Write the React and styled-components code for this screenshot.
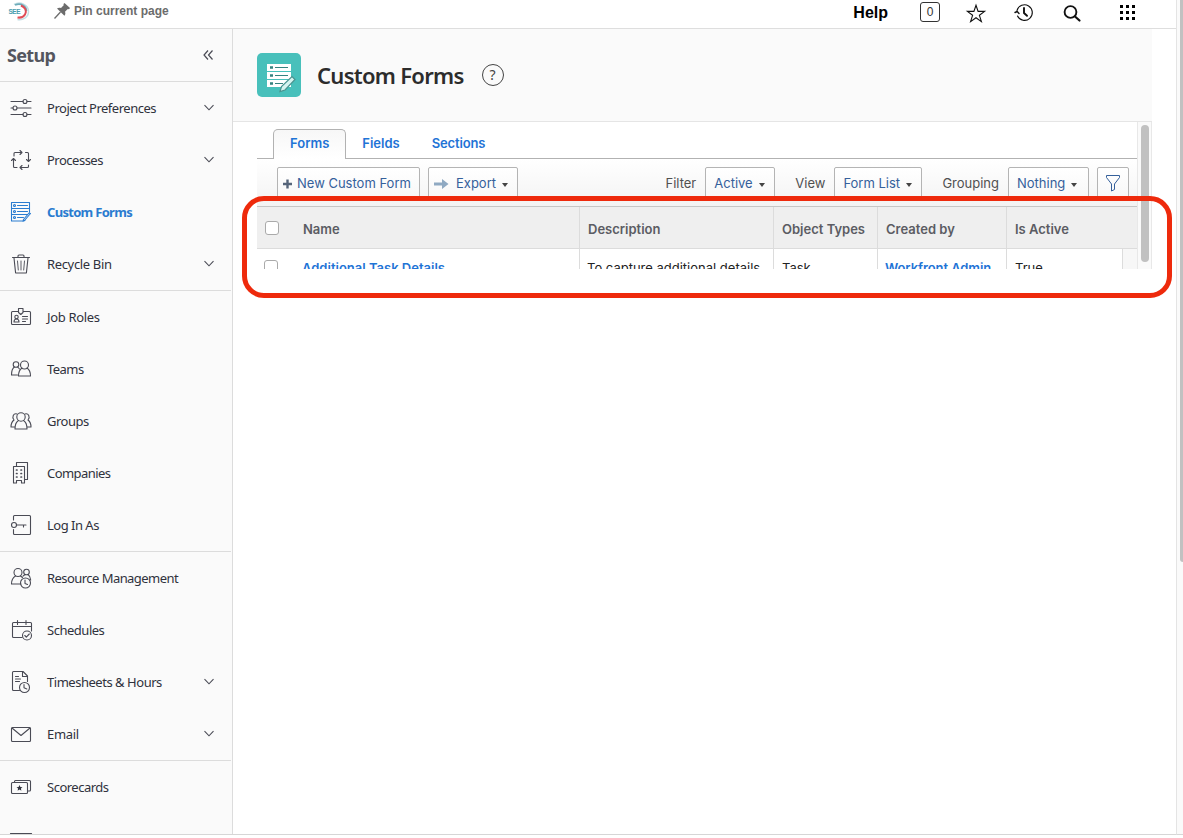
import React from 'react';
import styled, { createGlobalStyle } from 'styled-components';

const GlobalStyle = createGlobalStyle`
   * { box-sizing: border-box; }
   body {
      margin: 0;
      background: #fff;
      overflow: hidden;
   }
`

const clean = `"Noto Sans", "Open Sans", sans-serif`;
const nova = `Inter, "Open Sans", sans-serif`;

const Page = styled.div`
   display: flex;
   width: 1183px;
   height: 838px;
   overflow: hidden;
   position: relative;
`
const Window = styled.div`
   display: flex;
   flex-direction: column;
   width: 1176px;
   height: 835px;
   border-bottom: 1px solid #d6d6d6;
`
const Gutter = styled.div`
   display: flex;
   justify-content: flex-end;
   width: 7px;
   height: 835px;
   background: #fafafa;
   border-left: 1px solid #e4e4e4;
   border-bottom: 1px solid #d6d6d6;
`
const GutterThumb = styled.div`
   width: 3px;
   height: 562px;
   background: #c1c1c1;
   border-radius: 0 0 0 3px;
`
const Text = styled.span`
   display: inline-block;
   white-space: nowrap;
   letter-spacing: ${p => p.$ls || 0}px;
`

/* top bar */
const TopBar = styled.header`
   display: flex;
   justify-content: space-between;
   height: 29px;
   flex: none;
   border-bottom: 1px solid #dedede;
   font-family: "Liberation Sans", Arial, sans-serif;
`
const TopLeft = styled.div`
   display: flex;
   align-items: flex-start;
   padding-left: 6px;
`
const Pin = styled.div`
   display: flex;
   align-items: flex-start;
   gap: 3px;
   margin-left: 23px;
   color: #6c6c6c;
   font-size: 12px;
   font-weight: bold;
   line-height: 22px;
   svg { margin-top: 2px; }
`
const TopRight = styled.div`
   display: flex;
   align-items: center;
   height: 25px;
   padding-right: 40px;
`
const Help = styled.div`
   font-size: 16px;
   font-weight: bold;
   color: #000;
   margin-right: 32px;
`
const Count = styled.div`
   width: 20px;
   height: 20px;
   margin: -1px 24px 0 0;
   border: 1px solid #333;
   border-radius: 3px;
   font-size: 12px;
   line-height: 18px;
   text-align: center;
   color: #333;
`
const TopIcon = styled.div`
   display: flex;
   width: 24px;
   height: 24px;
   margin-right: ${p => p.$gap}px;
`

/* sidebar */
const Columns = styled.div`
   display: flex;
   flex: 1;
   min-height: 0;
`
const Sidebar = styled.nav`
   width: 233px;
   flex: none;
   overflow: hidden;
   background: #fafafa;
   border-right: 1px solid #dcdcdc;
   font-family: ${clean};
`
const SetupRow = styled.div`
   display: flex;
   align-items: center;
   justify-content: space-between;
   height: 53px;
   padding: 0 17px 0 7px;
   border-bottom: 1px solid #dcdcdc;
   color: #54565f;
   font-size: 18px;
   font-weight: bold;
`
const Group = styled.div`
   margin-right: 1px;
   border-bottom: 1px solid #dcdcdc;
`
const Item = styled.div`
   display: flex;
   align-items: center;
   height: 52px;
   padding: 0 14px 0 9px;
   font-size: 13px;
   color: ${p => p.$active ? '#2a7cd0' : '#30323d'};
   font-weight: ${p => p.$active ? 'bold' : 'normal'};
   > svg:first-child { margin-right: 14px; flex: none; }
   > svg:last-child { margin-left: auto; }
`

/* main area */
const Main = styled.main`
   display: flex;
   flex-direction: column;
   width: 919px;
`
const Banner = styled.div`
   display: flex;
   align-items: center;
   height: 93px;
   padding-left: 24px;
   background: #fafafa;
   border-bottom: 1px solid #e5e5e5;
`
const Tile = styled.div`
   width: 44px;
   height: 44px;
   border-radius: 5px;
   background: #48c0bb;
   margin-right: 16px;
`
const Title = styled.h1`
   margin: 0 18px 0 0;
   font-family: ${clean};
   font-size: 22px;
   line-height: 30px;
   font-weight: 600;
   color: #2c2c2c;
`
const Question = styled.div`
   width: 22px;
   height: 22px;
   border: 1px solid #444;
   border-radius: 50%;
   font-family: ${clean};
   font-size: 14px;
   line-height: 20px;
   text-align: center;
   color: #444;
`
const Frame = styled.div`
   display: flex;
   height: 147px;
   padding-left: 24px;
   overflow: hidden;
   font-family: ${nova};
`
const Content = styled.div`
   width: 880px;
   flex: none;
`
const Track = styled.div`
   display: flex;
   justify-content: center;
   width: 15px;
   height: 148px;
   padding: 3px 0 0 1px;
   background: #fafafa;
   border-left: 1px solid #e8e8e8;
   border-right: 1px solid #e8e8e8;
`
const Thumb = styled.div`
   width: 8px;
   height: 137px;
   border-radius: 4px;
   background: #c1c1c1;
`
const Tabs = styled.div`
   display: flex;
   height: 37px;
   padding: 7px 0 0 16px;
   border-bottom: 1px solid #b2b2b2;
   font-size: 13px;
   font-weight: 600;
   color: #1f74d6;
`
const Tab = styled.div`
   height: 30px;
   line-height: 27px;
   padding: 0 16px;
   margin-right: ${p => p.$gap || 0}px;
   border: 1px solid ${p => p.$active ? '#b2b2b2' : 'transparent'};
   border-bottom: none;
   border-radius: 5px 5px 0 0;
   background: ${p => p.$active ? 'linear-gradient(#f7f7f7, #fff)' : 'none'};
`
const Toolbar = styled.div`
   display: flex;
   justify-content: space-between;
   height: 47px;
   padding: 8px 8px 0 20px;
   background: linear-gradient(#ffffff, #f3f3f3);
   font-size: 13px;
`
const Tools = styled.div`
   display: flex;
   height: 34px;
`
const Button = styled.div`
   display: flex;
   align-items: flex-start;
   width: ${p => p.$w}px;
   height: 34px;
   padding: 0 0 0 ${p => p.$pad === undefined ? 8 : p.$pad}px;
   margin-right: ${p => p.$gap || 0}px;
   border: 1px solid #b4b4b4;
   border-radius: 2px;
   background: linear-gradient(#fff, #f7f7f7);
   color: #35609b;
   line-height: ${p => p.$lh || 30}px;
   svg { flex: none; }
`
const Caret = styled.i`
   width: 0;
   height: 0;
   margin: 15px 0 0 6px;
   border: 3.5px solid transparent;
   border-top: 4px solid #444;
   border-bottom: none;
`
const Field = styled.div`
   line-height: 32px;
   color: #505050;
   margin-right: ${p => p.$gap}px;
`
const Row = styled.div`
   display: grid;
   grid-template-columns: 323px 194px 104px 129px ${p => p.$head ? '130px' : '116px 14px'};
   height: ${p => p.$head ? 43 : 38}px;
   background: ${p => p.$head ? '#efefef' : '#fff'};
   border-top: ${p => p.$head ? '1px solid #c6c6c6' : 'none'};
   border-bottom: 1px solid #dcdcdc;
   font-size: 13px;
   font-weight: ${p => p.$head ? 600 : 400};
   color: ${p => p.$head ? '#5b5c63' : '#222'};
   line-height: ${p => p.$head ? 45 : 38}px;
   overflow: hidden;
`
const Cell = styled.div`
   display: flex;
   padding-left: ${p => p.$pad || 8}px;
   border-right: ${p => p.$last ? 'none' : '1px solid #dcdcdc'};
   background: ${p => p.$shade ? '#f7f7f7' : 'none'};
`
const Check = styled.div`
   width: 14px;
   height: 14px;
   margin: ${p => p.$head ? '14px 24px 0 0' : '11px 24px 0 -1px'};
   border: 1px solid #aaa;
   border-radius: 3px;
   background: #fff;
`
const Link = styled.span`
   font-weight: 600;
   color: #1f74d6;
`
const Highlight = styled.div`
   position: absolute;
   left: 242px;
   top: 196px;
   width: 930px;
   height: 102px;
   border: 5px solid #ee2a0c;
   border-radius: 22px;
`

const Icon = ({ children, color = '#4a4b55' }) => (
   <svg width="24" height="24" viewBox="0 0 24 24" fill="none" stroke={color} strokeWidth="1.1" strokeLinecap="round" strokeLinejoin="round">
      {children}
   </svg>
);

const Chevron = () => (
   <svg width="16" height="16" viewBox="0 0 16 16" fill="none" stroke="#4a4b55" strokeWidth="1.1">
      <path d="M3.5 5.2 8 9.8l4.5-4.6" />
   </svg>
);

const icons = {
   prefs: <><path d="M2 5.5h12M18 5.5h4M2 12h2M8 12h14M2 18.5h12M18 18.5h4" /><circle cx="16" cy="5.5" r="2" /><circle cx="6" cy="12" r="2" /><circle cx="16" cy="18.5" r="2" /></>,
   processes: <><path d="M5 8V5.500a1 1 0 0 1 1-1h7M11 2.500l2 2-2 2M16.500 4.500h2a1 1 0 0 1 1 1V13.500M17.500 11.500l2 2 2-2M19.500 17v1.500a1 1 0 0 1-1 1H11M13 17.500l-2 2 2 2M8 19.500H5.500a1 1 0 0 1-1-1V10.500M2.500 12.500l2-2 2 2" /></>,
   forms: <><path d="M20.500 12V2.500h-18V21h12l1.500-.5M2.500 8.500h18M2.500 14.500h16M8.500 5.500h10M8.500 11.500h10M8.500 17.500h6M21.500 13.500l-6 7-1.500.8.5-1.800 5.500-6.500z" /><circle cx="5.500" cy="5.500" r="1" /><circle cx="5.500" cy="11.500" r="1" /><circle cx="5.500" cy="17.500" r="1" /></>,
   trash: <><path d="M3.500 5.500h17M9 5.500V4a1 1 0 0 1 1-1h4a1 1 0 0 1 1 1v1.500M5 6l1.600 15h10.800L19 6" /><path d="M8.500 9l.8 9M12 9v9M15.500 9l-.8 9" strokeWidth="0.9" /></>,
   job: <><path d="M9 6.500H3.500a1 1 0 0 0-1 1v11a1 1 0 0 0 1 1h17a1 1 0 0 0 1-1v-11a1 1 0 0 0-1-1H14M9.500 3.500v4l2.300 2 2.200-2v-4zM13.500 11.500h5M13.500 14h5M13.500 16.500h3M5 17c0-2 .6-3 2.500-3s2.500 1 2.500 3z" /><circle cx="7.500" cy="12" r="1.700" /></>,
   teams: <><circle cx="15.500" cy="8" r="4" /><path d="M13 11c-2.300 1.500-3.500 4-3.500 8h12c0-4-1.200-6.500-3.500-8" /><circle cx="7" cy="7.500" r="2.800" /><path d="M5.300 10C3.300 11.500 2.500 14 2.500 18h6M8.700 10l1.800 2" /></>,
   groups: <><circle cx="12" cy="8" r="4.200" /><path d="M9.500 11.500C7 13 6 16 6 20h12c0-4-1-7-3.500-8.500M8 5C4.500 4 2.500 8 5 11c-2 1.500-3 4-3 7h3.800M16 5c3.500-1 5.500 3 3 6 2 1.500 3 4 3 7h-3.800" /></>,
   companies: <><path d="M4.500 22V5.500h11V22h-3v-2.500H7.500V22zM7.500 5V1.500h11V18.500h-2.500" /><path d="M7.500 9h.5M12 9h.5M7.500 12.500h.5M12 12.500h.5M7.500 16h.5M12 16h.5" strokeWidth="1.700" /></>,
   login: <><path d="M4.500 7V3.500a1 1 0 0 1 1-1h15a1 1 0 0 1 1 1v17a1 1 0 0 1-1 1h-15a1 1 0 0 1-1-1V16.500M7.500 12h9.500M14.500 12v2" /><circle cx="5" cy="12" r="2.500" /></>,
   resource: <><circle cx="9" cy="6.500" r="4" /><path d="M6.500 10C4 11.500 2.500 14 2.500 18h9.500M11.500 10l2 1.500" /><circle cx="17.500" cy="6" r="2.800" /><path d="M16 8.500l-2 1.700M19 8.500c1.500 1 2.500 3 2.700 5.500" /><circle cx="16.500" cy="17" r="5" /><path d="M16 14v3.500l2.500 1" /></>,
   schedules: <><path d="M13 19.500H4.500a1 1 0 0 1-1-1v-13a1 1 0 0 1 1-1h17a1 1 0 0 1 1 1V13M3.500 8.500h19M8.500 2.500v4M17 2.500v4" /><circle cx="18" cy="17.500" r="4.500" /><path d="M15.800 17.500l1.500 1.600 3-3.100" /></>,
   timesheets: <><path d="M10.500 20.500H4.500a1 1 0 0 1-1-1V2.500a1 1 0 0 1 1-1h9.500l4.500 4.500v5.500M13.500 1.500v5h5M6.500 6.500h3M6.500 9h5M6.500 11.500h4" /><circle cx="15.500" cy="17.500" r="5" /><path d="M15 14.500v3.300l2.800 1.200" /></>,
   email: <><rect x="2.500" y="5.500" width="19" height="14" rx="1" /><path d="M3 6l9 7.500L21 6" /></>,
   score: <><path d="M5.500 7.500V6.500a1 1 0 0 1 1-1h14a1 1 0 0 1 1 1v8.500a1 1 0 0 1-1 1h-2" /><rect x="2.500" y="7.500" width="16" height="11" rx="1" /><path d="M10.500 10l.9 2 2.100.2-1.600 1.400.5 2.100-1.900-1.100-1.900 1.100.5-2.100-1.600-1.400 2.100-.2z" fill="#30323d" stroke="none" /></>,
   next: <path d="M1.500 6.500h21v12h-21z" />,
};

const groups = [
   [
      { icon: 'prefs', label: 'Project Preferences', open: true, ls: -0.48 },
      { icon: 'processes', label: 'Processes', open: true, ls: -0.5 },
      { icon: 'forms', label: 'Custom Forms', active: true, ls: -0.7 },
      { icon: 'trash', label: 'Recycle Bin', open: true, ls: -0.35 },
   ],
   [
      { icon: 'job', label: 'Job Roles', ls: -0.35 },
      { icon: 'teams', label: 'Teams', ls: -0.55 },
      { icon: 'groups', label: 'Groups', ls: -0.5 },
      { icon: 'companies', label: 'Companies', ls: -0.55 },
      { icon: 'login', label: 'Log In As', ls: -0.5 },
   ],
   [
      { icon: 'resource', label: 'Resource Management', ls: -0.55 },
      { icon: 'schedules', label: 'Schedules', ls: -0.48 },
      { icon: 'timesheets', label: 'Timesheets & Hours', open: true, ls: -0.47 },
      { icon: 'email', label: 'Email', open: true, ls: -0.35 },
   ],
   [
      { icon: 'score', label: 'Scorecards', ls: -0.5 },
      { icon: 'next', label: '' },
   ],
];

const Logo = () => (
   <svg width="25" height="24" viewBox="0 0 25 24" fill="none">
      <path d="M8 4.500C14 1 22.500 4.500 22.500 11.500c0 6-6 9-11 8" stroke="#c3dfe5" strokeWidth="1.500" />
      <path d="M9 5c6-2.500 11.500 1 11.500 6" stroke="#6cabb9" strokeWidth="1.600" />
      <path d="M15 5.500c4.500 2 6 5.500 4 9-1.500 2.500-4 3.500-7.500 3" stroke="#df4d57" strokeWidth="2" />
      <text x="2.500" y="13.500" fontSize="6.500" fontWeight="bold" fill="#4a9caf" fontFamily="Liberation Sans" textLength="12">SEE</text>
   </svg>
);

const TopBarView = () => (
   <TopBar>
      <TopLeft>
         <Logo />
         <Pin>
            <svg width="17" height="18" viewBox="0 0 17 18">
               <path d="M10.500 1l5.500 5-1 1.200-1.200-.2-2.800 2.700c.7 1.700.4 3.100-.6 4L3 6.500C4.200 5.500 5.500 5.400 7 6l2.700-2.700L9.500 2z" fill="#6c6c6c" />
               <path d="M6.500 10 .5 16.500" stroke="#6c6c6c" strokeWidth="1.300" />
            </svg>
            <Text>Pin current page</Text>
         </Pin>
      </TopLeft>
      <TopRight>
         <Help><Text>Help</Text></Help>
         <Count>0</Count>
         <TopIcon $gap={24}>
            <Icon color="#111"><path strokeLinejoin="miter" d="M12 4.200l2.100 6.200h6.500l-5.200 3.900 2 6.300-5.400-3.900-5.400 3.900 2-6.300-5.200-3.900h6.500z" /></Icon>
         </TopIcon>
         <TopIcon $gap={24}>
            <Icon color="#111">
               <path d="M5 9.500a7.800 7.800 0 1 1 .5 5.500" />
               <path d="M3 11.500l2.200-1 1.800 2" strokeWidth="1.400" />
               <path d="M12 7v5l3 2.800" strokeWidth="1.900" />
            </Icon>
         </TopIcon>
         <TopIcon $gap={31}>
            <Icon color="#111"><circle cx="10.500" cy="11" r="5.900" strokeWidth="1.900" /><path d="M15 15.500l4.500 4" strokeWidth="2.200" /></Icon>
         </TopIcon>
         <TopIcon $gap={-3}>
            <svg width="24" height="24" viewBox="0 0 24 24" fill="#000">
               {[4, 10, 16].map(y => [5, 11, 17].map(x => <rect key={`${x}-${y}`} x={x} y={y} width="3" height="3" />))}
            </svg>
         </TopIcon>
      </TopRight>
   </TopBar>
);

const SidebarView = () => (
   <Sidebar>
      <SetupRow>
         <Text $ls={-0.7}>Setup</Text>
         <svg width="14" height="14" viewBox="0 0 14 14" fill="none" stroke="#4a4b55" strokeWidth="1.200">
            <path d="M7 2.500 3 7l4 4.500M11.500 2.500 7.500 7l4 4.500" />
         </svg>
      </SetupRow>
      {groups.map((items, i) => (
         <Group key={i}>
            {items.map(item => (
               <Item key={item.icon} $active={item.active}>
                  <Icon color={item.active ? '#2a7cd0' : undefined}>{icons[item.icon]}</Icon>
                  <Text $ls={item.ls}>{item.label}</Text>
                  {item.open && <Chevron />}
               </Item>
            ))}
         </Group>
      ))}
   </Sidebar>
);

const App = () => (
   <>
      <GlobalStyle />
      <Page>
         <Window>
            <TopBarView />
            <Columns>
               <SidebarView />
               <Main>
                  <Banner>
                     <Tile>
                        <svg width="44" height="44" viewBox="0 0 44 44">
                           <path d="M10 11h24v7H10zM10 19h24v7H10zM10 27h24v7H10z" fill="#fff" />
                           <path d="M18 14.500h13M18 22.500h13M18 30.500h8" stroke="#35827f" strokeWidth="1.200" />
                           <path d="M13 14.500h3M13 22.500h3M13 30.500h3" stroke="#35827f" strokeWidth="2.600" />
                           <path d="M23 38.500l1.500-5L35 23.500l3 3L28 37z" fill="#d5f3f0" stroke="#48938f" strokeWidth="1.200" />
                        </svg>
                     </Tile>
                     <Title><Text $ls={-0.72}>Custom Forms</Text></Title>
                     <Question>?</Question>
                  </Banner>
                  <Frame>
                     <Content>
                        <Tabs>
                           <Tab $active $gap={-1}><Text>Forms</Text></Tab>
                           <Tab $gap={-2}><Text>Fields</Text></Tab>
                           <Tab><Text $ls={-0.15}>Sections</Text></Tab>
                        </Tabs>
                        <Toolbar>
                           <Tools>
                              <Button $w={143} $gap={8} $pad={5} $lh={31}>
                                 <svg width="14" height="32" viewBox="0 0 14 32"><path d="M4.500 11.500v9M0 16h9" stroke="#56657a" strokeWidth="2.400" /></svg>
                                 <Text>New Custom Form</Text>
                              </Button>
                              <Button $w={90} $pad={5} $lh={31}>
                                 <svg width="22" height="32" viewBox="0 0 22 32"><path d="M0 14.500h8V11l6.500 5L8 21v-3.500H0z" fill="#8fa9c2" /></svg>
                                 <Text>Export</Text><Caret />
                              </Button>
                           </Tools>
                           <Tools>
                              <Field $gap={9}><Text>Filter</Text></Field>
                              <Button $w={70} $gap={20}><Text>Active</Text><Caret /></Button>
                              <Field $gap={9}><Text>View</Text></Field>
                              <Button $w={88} $gap={20}><Text>Form List</Text><Caret /></Button>
                              <Field $gap={9}><Text>Grouping</Text></Field>
                              <Button $w={81} $gap={8}><Text>Nothing</Text><Caret /></Button>
                              <Button $w={32} $pad={7}>
                                 <svg width="16" height="32" viewBox="0 0 16 32" fill="none" stroke="#35609b" strokeWidth="1"><path d="M1.500 7.500h13v2L9.500 16v5.500l-3 1.500v-7L1.500 9.500z" /></svg>
                              </Button>
                           </Tools>
                        </Toolbar>
                        <Row $head>
                           <Cell><Check $head /><Text>Name</Text></Cell>
                           <Cell><Text>Description</Text></Cell>
                           <Cell><Text>Object Types</Text></Cell>
                           <Cell><Text>Created by</Text></Cell>
                           <Cell $last><Text>Is Active</Text></Cell>
                        </Row>
                        <Row>
                           <Cell><Check /><Link><Text>Additional Task Details</Text></Link></Cell>
                           <Cell $pad={7}><Text>To capture additional details</Text></Cell>
                           <Cell><Text>Task</Text></Cell>
                           <Cell $pad={7}><Link><Text $ls={-0.08}>Workfront Admin</Text></Link></Cell>
                           <Cell><Text>True</Text></Cell>
                           <Cell $last $shade />
                        </Row>
                     </Content>
                     <Track><Thumb /></Track>
                  </Frame>
               </Main>
            </Columns>
         </Window>
         <Gutter><GutterThumb /></Gutter>
         <Highlight />
      </Page>
   </>
);

export default App;
